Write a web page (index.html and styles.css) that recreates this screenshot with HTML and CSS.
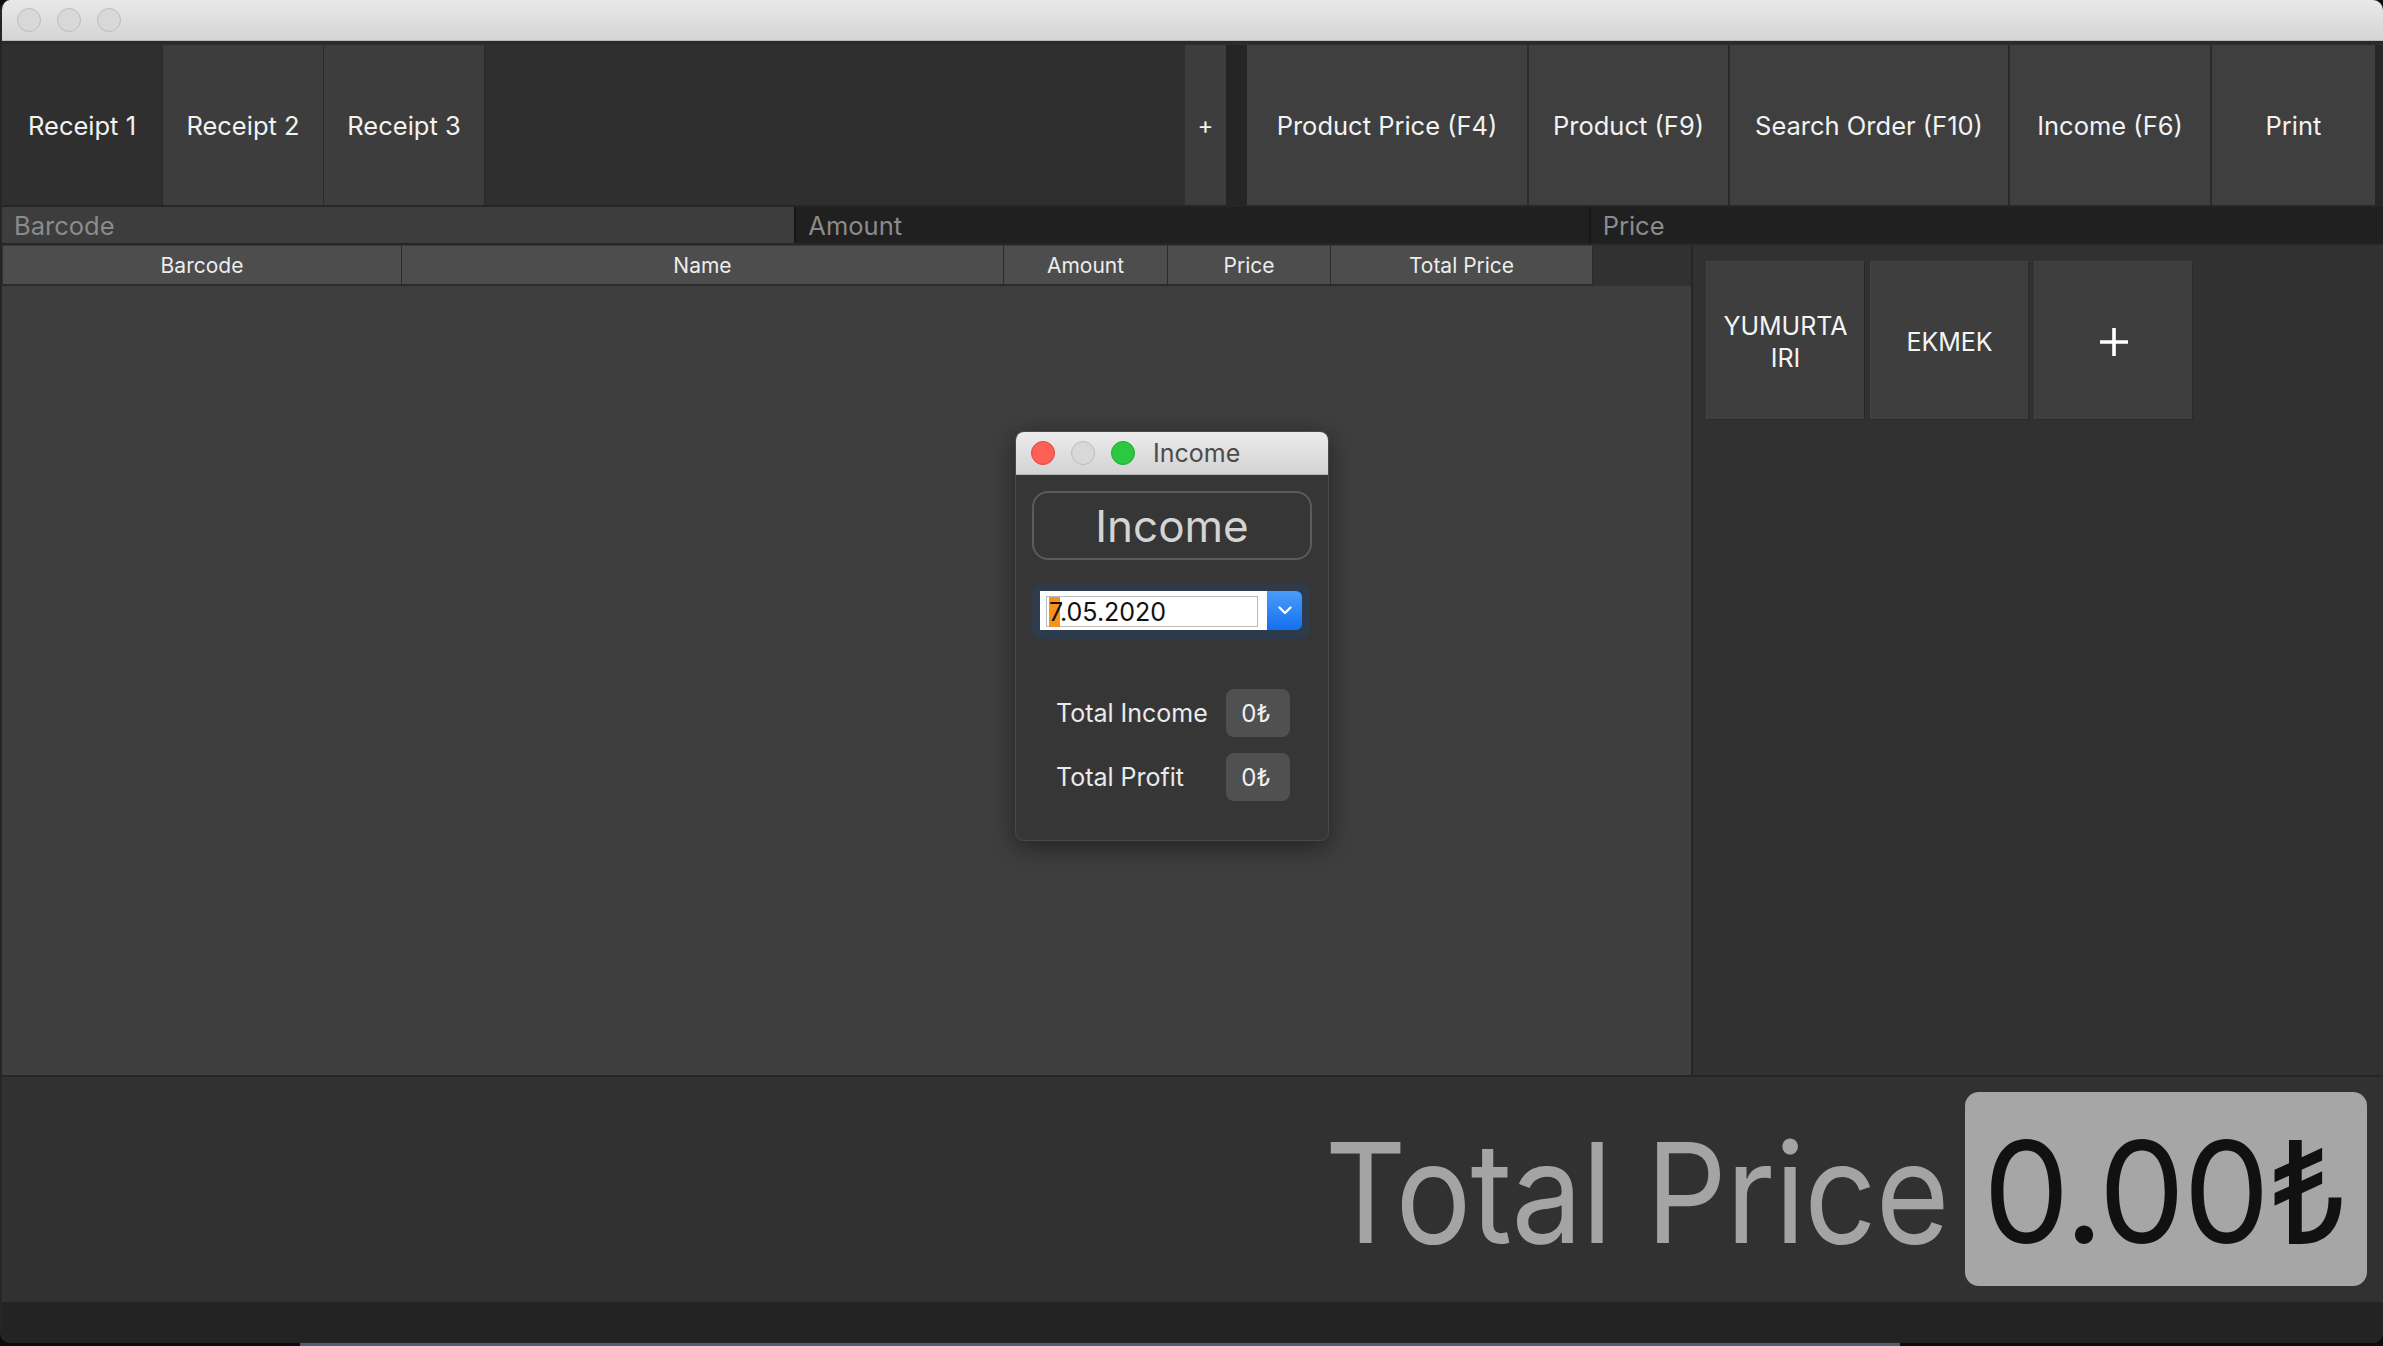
FILE: index.html
```html
<!DOCTYPE html>
<html lang="en">
<head>
<meta charset="utf-8">
<title>POS</title>
<link rel="stylesheet" href="styles.css">
</head>
<body>
<div class="window">
  <div class="titlebar">
    <span class="light off"></span><span class="light off"></span><span class="light off"></span>
  </div>
  <div class="toprow">
    <div class="tab selected">Receipt 1</div>
    <div class="tab">Receipt 2</div>
    <div class="tab">Receipt 3</div>
    <div class="tabfill"></div>
    <div class="tabadd">+</div>
    <div class="tabgap"></div>
    <div class="action a-pp">Product Price (F4)</div>
    <div class="action a-p">Product (F9)</div>
    <div class="action a-so">Search Order (F10)</div>
    <div class="action a-in">Income (F6)</div>
    <div class="action a-pr">Print</div>
    <div class="edge"></div>
  </div>
  <div class="inputs">
    <div class="field focus">Barcode</div>
    <div class="field">Amount</div>
    <div class="field">Price</div>
  </div>
  <div class="middle">
    <div class="table">
      <div class="thead">
        <div class="th c1">Barcode</div>
        <div class="th c2">Name</div>
        <div class="th c3">Amount</div>
        <div class="th c4">Price</div>
        <div class="th c5">Total Price</div>
      </div>
      <div class="tbody"></div>
    </div>
    <div class="panel">
      <div class="pbtn">YUMURTA<br>IRI</div>
      <div class="pbtn">EKMEK</div>
      <div class="pbtn plus">
        <svg width="30" height="30" viewBox="0 0 30 30"><path d="M15 1v28M1 15h28" stroke="#fff" stroke-width="3.6" fill="none"/></svg>
      </div>
    </div>
  </div>
  <div class="totalbar">
    <div class="total-label">Total Price</div>
    <div class="total-box"><span class="total-val">0.00₺</span></div>
  </div>
  <div class="statusbar"></div>

  <div class="dialog">
    <div class="dtitle">
      <span class="light red"></span><span class="light off"></span><span class="light green"></span>
      <span class="dname">Income</span>
    </div>
    <div class="dbody">
      <div class="bigbtn">Income</div>
      <div class="dring">
        <div class="dfield"><div class="dinner"><span class="sel">7</span>.05.2020</div></div>
        <div class="darrow">
          <svg width="14" height="9" viewBox="0 0 14 9"><path d="M1.5 1.5L7 7l5.5-5.5" stroke="#fff" stroke-width="2.4" fill="none" stroke-linecap="round" stroke-linejoin="round"/></svg>
        </div>
      </div>
      <div class="drow first"><span class="dlabel">Total Income</span><span class="dval">0₺</span></div>
      <div class="drow"><span class="dlabel">Total Profit</span><span class="dval">0₺</span></div>
    </div>
  </div>
</div>
<div class="desk"></div>
</body>
</html>
```

FILE: styles.css
```css
* { box-sizing: border-box; }
html, body { margin: 0; padding: 0; }
body {
  background: #0c0c0e;
  font-family: Inter, "Noto Sans", "DejaVu Sans", sans-serif;
  width: 2383px;
  height: 1346px;
  overflow: hidden;
}
.window {
  position: relative;
  width: 2383px;
  height: 1343px;
  background: #303030;
  border-radius: 10px;
  overflow: hidden;
  display: flex;
  flex-direction: column;
  border-left: 2px solid #262626;
}
.titlebar {
  height: 44px;
  flex: none;
  margin-left: -2px;
  background: linear-gradient(#e9e9e9, #d4d4d4);
  border-bottom: 3px solid #2a2a2a;
  box-shadow: inset 0 -1px 0 #b9b9b9;
  display: flex;
  align-items: center;
  padding-left: 17px;
  padding-bottom: 2px;
  gap: 16px;
}
.light {
  width: 24px;
  height: 24px;
  border-radius: 50%;
  display: inline-block;
  flex: none;
}
.light.off { background: #d8d8d8; border: 1px solid #bcbcbc; }
.light.red { background: #fe5f57; border: 1px solid #e0443e; }
.light.green { background: #2ac940; border: 1px solid #1daa2c; }

.toprow {
  height: 163px;
  flex: none;
  display: flex;
  padding-top: 1px;
  border-bottom: 2px solid #262626;
  background: #2f2f2f;
  color: #f2f2f2;
  font-size: 25.5px;
}
.tab, .action, .tabadd {
  display: flex;
  align-items: center;
  justify-content: center;
  flex: none;
}
.tab {
  width: 161px;
  background: #3d3d3d;
  border-right: 1px solid #2a2a2a;
}
.tab.selected { background: #2f2f2f; }
.tabfill { flex: 1; background: #2f2f2f; }
.tabadd { width: 41px; background: #3d3d3d; font-size: 24px; }
.tabgap { width: 21px; flex: none; background: #252525; }
.action {
  background: #3f3f3f;
  border-right: 2px solid #2a2a2a;
}
.a-pp { width: 282px; }
.a-p { width: 201px; }
.a-so { width: 280px; }
.a-in { width: 202px; }
.a-pr { width: 163px; border-right: none; }
.edge { width: 8px; flex: none; background: #262626; }

.inputs {
  height: 38px;
  flex: none;
  display: flex;
  gap: 2px;
  background: #161616;
  border-bottom: 2px solid #262626;
}
.field {
  flex: 1;
  background: #202020;
  color: #8b8b8b;
  font-size: 25.5px;
  display: flex;
  align-items: center;
  padding-left: 12px;
  padding-top: 1px;
}
.field.focus { background: #3d3d3d; }

.middle {
  height: 830px;
  flex: none;
  display: flex;
}
.table {
  width: 1691px;
  flex: none;
  display: flex;
  flex-direction: column;
  border-right: 2px solid #262626;
}
.thead {
  height: 41px;
  flex: none;
  display: flex;
  padding-left: 1px;
  background: #313131;
}
.th {
  background: #4d4d4d;
  border-right: 1px solid #2b2b2b;
  border-bottom: 2px solid #2b2b2b;
  border-top: 1px solid #3a3a3a;
  color: #ececec;
  font-size: 21px;
  display: flex;
  align-items: center;
  justify-content: center;
}
.c1 { width: 399px; }
.c2 { width: 602px; }
.c3 { width: 164px; }
.c4 { width: 163px; }
.c5 { width: 262px; }
.tbody { flex: 1; background: #3e3e3e; }

.panel {
  flex: 1;
  background: #313131;
  display: flex;
  align-items: flex-start;
  gap: 5px;
  padding: 16px 0 0 13px;
}
.pbtn {
  width: 159px;
  height: 159px;
  background: #3e3e3e;
  border: 1px solid #292929;
  border-top-color: #444;
  border-left-color: #444;
  color: #f4f4f4;
  font-size: 25px;
  line-height: 32px;
  text-align: center;
  display: flex;
  align-items: center;
  justify-content: center;
  padding-top: 2px;
}

.totalbar {
  height: 227px;
  flex: none;
  border-top: 2px solid #262626;
  background: #313131;
  display: flex;
  align-items: center;
  justify-content: flex-end;
  padding-right: 16px;
  padding-bottom: 2px;
}
.total-label {
  color: #a4a4a4;
  font-size: 139px;
  line-height: 1;
  letter-spacing: -1px;
  transform: scaleX(0.91);
  transform-origin: right center;
  margin-right: 16px;
  padding-top: 8px;
}
.total-box {
  width: 402px;
  height: 194px;
  background: #a6a6a6;
  border-radius: 14px;
  display: flex;
  align-items: center;
  padding-left: 18px;
  padding-top: 6px;
}
.total-val {
  color: #111;
  font-size: 141px;
  line-height: 1;
  letter-spacing: -2px;
  transform: scaleX(0.975);
  transform-origin: left center;
}
.statusbar { flex: 1; background: #232323; }

.desk {
  height: 3px;
  width: 1600px;
  margin-left: 300px;
  background: #4f5d70;
}

/* dialog */
.dialog {
  position: absolute;
  left: 1013px;
  top: 431px;
  width: 314px;
  height: 410px;
  border-radius: 9px;
  overflow: hidden;
  background: #363636;
  border: 1px solid #4a4a4a;
  box-shadow: 0 6px 24px rgba(0,0,0,0.45);
}
.dtitle {
  height: 43px;
  background: linear-gradient(#ececec, #d3d3d3);
  border-bottom: 1px solid #b5b5b5;
  display: flex;
  align-items: center;
  padding-left: 15px;
  gap: 16px;
}
.dname {
  color: #4b4b4b;
  font-size: 25px;
  margin-left: 2px;
}
.dbody { padding: 16px 16px 0 16px; }
.bigbtn {
  width: 280px;
  height: 69px;
  border: 2px solid #5b5b5b;
  border-radius: 16px;
  color: #d4d4d4;
  font-size: 44px;
  display: flex;
  align-items: center;
  justify-content: center;
}
.dring {
  margin-top: 23px;
  width: 278px;
  height: 56px;
  background: #2e3b4c;
  border-radius: 10px;
  padding: 8px;
  display: flex;
}
.dfield {
  width: 227px;
  height: 39px;
  background: #fff;
  padding: 5px 9px 3px 6px;
}
.dinner {
  height: 100%;
  border: 1px solid #bcbcbc;
  color: #111;
  font-size: 25px;
  line-height: 30px;
  padding-left: 2px;
  white-space: nowrap;
}
.sel { background: #f7921e; }
.darrow {
  width: 35px;
  height: 39px;
  background: linear-gradient(#4a9cf9, #1570f1);
  border-radius: 0 6px 6px 0;
  display: flex;
  align-items: center;
  justify-content: center;
}
.drow {
  display: flex;
  align-items: center;
  margin-top: 16px;
  padding-left: 24px;
}
.drow.first { margin-top: 50px; }
.dlabel {
  width: 170px;
  color: #eaeaea;
  font-size: 25px;
}
.dval {
  width: 64px;
  height: 48px;
  background: #505050;
  border-radius: 8px;
  color: #f0f0f0;
  font-size: 24px;
  display: flex;
  align-items: center;
  justify-content: center;
  padding-right: 4px;
}
```
